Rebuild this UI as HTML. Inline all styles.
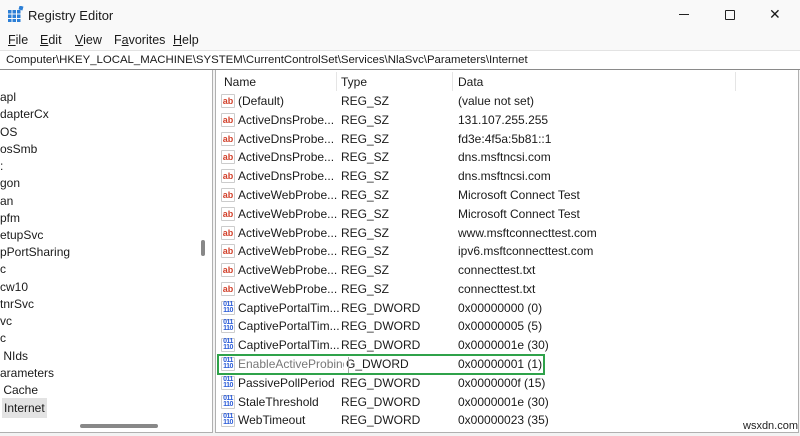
<!DOCTYPE html>
<html><head><style>
*{margin:0;padding:0;box-sizing:border-box}
body{width:800px;height:436px;overflow:hidden;background:#f3f3f3;font-family:"Liberation Sans",sans-serif;font-size:12px;color:#1a1a1a;position:relative}
.abs{position:absolute;white-space:nowrap}
.menu span{position:absolute;top:0}
.row{position:absolute;left:217px;height:19px;width:580px}
.row span{position:absolute;top:2px}
.ic{position:absolute;left:4px;top:2px;width:14px;height:14px;border:1px solid #ccc;border-radius:1px;background:#fff;font-size:9px;font-weight:bold;line-height:12px;text-align:center}
.ab{color:#d2412b}
.bn{color:#2a5bd7;font-size:7px;line-height:6px;letter-spacing:-0.5px}
.l{position:absolute;left:0;font-size:12px;white-space:nowrap}
</style></head><body>
<div class="abs" style="left:0;top:0;width:800px;height:50px;background:#f9f9f9"></div>
<svg class="abs" style="left:8px;top:6px" width="16" height="16"><g fill="#2c7fd6"><rect x="0" y="4" width="3.5" height="3.5"/><rect x="4.5" y="4" width="3.5" height="3.5"/><rect x="9" y="4" width="3.5" height="3.5"/><rect x="0" y="8.5" width="3.5" height="3.5"/><rect x="4.5" y="8.5" width="3.5" height="3.5"/><rect x="9" y="8.5" width="3.5" height="3.5"/><rect x="0" y="13" width="3.5" height="3"/><rect x="4.5" y="13" width="3.5" height="3"/><rect x="9" y="13" width="3.5" height="3"/><rect x="11" y="0" width="4" height="4" transform="rotate(15 13 2)"/></g></svg>
<div class="abs" style="left:28px;top:8px;font-size:13px">Registry Editor</div>
<div class="abs" style="left:679px;top:14px;width:10px;height:1px;background:#222"></div>
<div class="abs" style="left:725px;top:10px;width:10px;height:10px;border:1px solid #222;border-radius:1px"></div>
<div class="abs" style="left:769px;top:6px;font-size:14px">✕</div>
<div class="abs menu" style="left:0;top:33px;font-size:12.5px"><span style="left:8px"><u>F</u>ile</span><span style="left:40px"><u>E</u>dit</span><span style="left:75px"><u>V</u>iew</span><span style="left:114px">F<u>a</u>vorites</span><span style="left:173px"><u>H</u>elp</span></div>
<div class="abs" style="left:0;top:50px;width:800px;height:20px;background:#fff;border-top:1px solid #e3e3e3;border-bottom:1px solid #8a8a8a;padding:3px 0 0 6px;font-size:11.4px">Computer\HKEY_LOCAL_MACHINE\SYSTEM\CurrentControlSet\Services\NlaSvc\Parameters\Internet</div>
<div class="abs" style="left:0;top:70px;width:213px;height:363px;background:#fff;border-right:1px solid #b0b0b0;border-bottom:1px solid #b0b0b0;overflow:hidden">
<div class="l" style="top:20px">apl</div><div class="l" style="top:37px">dapterCx</div><div class="l" style="top:55px">OS</div><div class="l" style="top:72px">osSmb</div><div class="l" style="top:89px">:</div><div class="l" style="top:106px">gon</div><div class="l" style="top:124px">an</div><div class="l" style="top:141px">pfm</div><div class="l" style="top:158px">etupSvc</div><div class="l" style="top:175px">pPortSharing</div><div class="l" style="top:192px">c</div><div class="l" style="top:210px">cw10</div><div class="l" style="top:227px">tnrSvc</div><div class="l" style="top:244px">vc</div><div class="l" style="top:261px">c</div><div class="l" style="top:279px">&nbsp;NIds</div><div class="l" style="top:296px">arameters</div><div class="l" style="top:313px">&nbsp;Cache</div>
<div class="l" style="top:328px;left:2px;width:45px;height:20px;background:#e3e3e3;padding:3px 0 0 2px">Internet</div>
<div style="position:absolute;left:201px;top:170px;width:4px;height:16px;background:#888;border-radius:2px"></div>
<div style="position:absolute;left:80px;top:354px;width:78px;height:4px;background:#888;border-radius:2px"></div>
</div>
<div class="abs" style="left:215px;top:70px;width:584px;height:363px;background:#fff;border-left:1px solid #b0b0b0;border-right:1px solid #b0b0b0;border-bottom:1px solid #b0b0b0"></div>
<div class="abs" style="left:224px;top:75px">Name</div>
<div class="abs" style="left:341px;top:75px">Type</div>
<div class="abs" style="left:458px;top:75px">Data</div>
<div class="abs" style="left:336px;top:72px;width:1px;height:19px;background:#e5e5e5"></div>
<div class="abs" style="left:452px;top:72px;width:1px;height:19px;background:#e5e5e5"></div>
<div class="abs" style="left:735px;top:72px;width:1px;height:19px;background:#e5e5e5"></div>

<div class="row" style="top:92px"><div class="ic ab">ab</div><span style="left:21px">(Default)</span><span style="left:124px">REG_SZ</span><span style="left:241px">(value not set)</span></div>
<div class="row" style="top:111px"><div class="ic ab">ab</div><span style="left:21px">ActiveDnsProbe...</span><span style="left:124px">REG_SZ</span><span style="left:241px">131.107.255.255</span></div>
<div class="row" style="top:130px"><div class="ic ab">ab</div><span style="left:21px">ActiveDnsProbe...</span><span style="left:124px">REG_SZ</span><span style="left:241px">fd3e:4f5a:5b81::1</span></div>
<div class="row" style="top:148px"><div class="ic ab">ab</div><span style="left:21px">ActiveDnsProbe...</span><span style="left:124px">REG_SZ</span><span style="left:241px">dns.msftncsi.com</span></div>
<div class="row" style="top:167px"><div class="ic ab">ab</div><span style="left:21px">ActiveDnsProbe...</span><span style="left:124px">REG_SZ</span><span style="left:241px">dns.msftncsi.com</span></div>
<div class="row" style="top:186px"><div class="ic ab">ab</div><span style="left:21px">ActiveWebProbe...</span><span style="left:124px">REG_SZ</span><span style="left:241px">Microsoft Connect Test</span></div>
<div class="row" style="top:205px"><div class="ic ab">ab</div><span style="left:21px">ActiveWebProbe...</span><span style="left:124px">REG_SZ</span><span style="left:241px">Microsoft Connect Test</span></div>
<div class="row" style="top:224px"><div class="ic ab">ab</div><span style="left:21px">ActiveWebProbe...</span><span style="left:124px">REG_SZ</span><span style="left:241px">www.msftconnecttest.com</span></div>
<div class="row" style="top:242px"><div class="ic ab">ab</div><span style="left:21px">ActiveWebProbe...</span><span style="left:124px">REG_SZ</span><span style="left:241px">ipv6.msftconnecttest.com</span></div>
<div class="row" style="top:261px"><div class="ic ab">ab</div><span style="left:21px">ActiveWebProbe...</span><span style="left:124px">REG_SZ</span><span style="left:241px">connecttest.txt</span></div>
<div class="row" style="top:280px"><div class="ic ab">ab</div><span style="left:21px">ActiveWebProbe...</span><span style="left:124px">REG_SZ</span><span style="left:241px">connecttest.txt</span></div>
<div class="row" style="top:299px"><div class="ic bn">011<br>110</div><span style="left:21px">CaptivePortalTim...</span><span style="left:124px">REG_DWORD</span><span style="left:241px">0x00000000 (0)</span></div>
<div class="row" style="top:317px"><div class="ic bn">011<br>110</div><span style="left:21px">CaptivePortalTim...</span><span style="left:124px">REG_DWORD</span><span style="left:241px">0x00000005 (5)</span></div>
<div class="row" style="top:336px"><div class="ic bn">011<br>110</div><span style="left:21px">CaptivePortalTim...</span><span style="left:124px">REG_DWORD</span><span style="left:241px">0x0000001e (30)</span></div>
<div class="row" style="top:355px"><div class="ic bn">011<br>110</div><span style="left:21px;color:#777">EnableActiveProbing</span><span style="left:127px;background:#fff;padding-left:2px">G_DWORD</span><span style="left:241px">0x00000001 (1)</span></div>
<div class="abs" style="left:348px;top:357px;width:1px;height:16px;background:#aaa"></div>
<div class="abs" style="left:217px;top:354px;width:328px;height:21px;border:2px solid #2fa24a"></div>
<div class="row" style="top:374px"><div class="ic bn">011<br>110</div><span style="left:21px">PassivePollPeriod</span><span style="left:124px">REG_DWORD</span><span style="left:241px">0x0000000f (15)</span></div>
<div class="row" style="top:393px"><div class="ic bn">011<br>110</div><span style="left:21px">StaleThreshold</span><span style="left:124px">REG_DWORD</span><span style="left:241px">0x0000001e (30)</span></div>
<div class="row" style="top:411px"><div class="ic bn">011<br>110</div><span style="left:21px">WebTimeout</span><span style="left:124px">REG_DWORD</span><span style="left:241px">0x00000023 (35)</span></div>
<div class="abs" style="left:743px;top:420px;font-size:11px;color:#222">wsxdn.com</div>
</body></html>
